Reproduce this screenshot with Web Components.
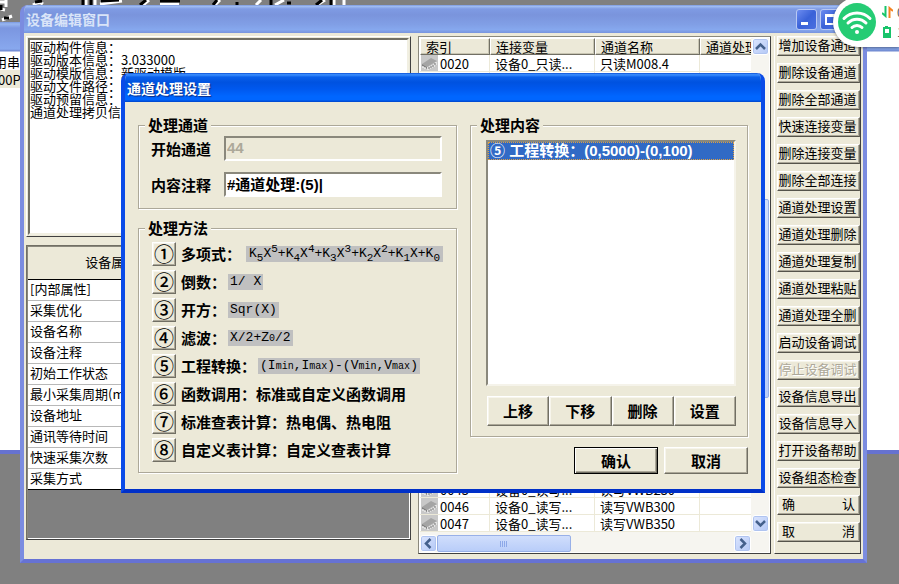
<!DOCTYPE html>
<html lang="zh-CN">
<head>
<meta charset="utf-8">
<title>设备编辑窗口</title>
<style>
html,body{height:100%;margin:0}
body{overflow:hidden;background:#808080;font:13px/13px "Noto Sans CJK SC",sans-serif;color:#000}
</style>
</head>
<body>
<device-app></device-app>
<script>
const define=(name,html,setup)=>{
  const t=document.createElement('template');
  t.innerHTML='<style>*{box-sizing:border-box}:host{display:block;box-sizing:border-box}button,input,textarea{font:inherit;color:inherit;margin:0;border-radius:0}</style>'+html;
  customElements.define(name,class extends HTMLElement{
    constructor(){super();this.attachShadow({mode:'open'}).append(t.content.cloneNode(true));}
    connectedCallback(){if(setup&&!this.ready){this.ready=true;setup(this,this.shadowRoot);}}
  });
};

/* Window frame with a title bar */
define('xp-window',`<style>
:host{display:flex;flex-direction:column;border-radius:8px 8px 0 0;background:#ece9d8;
 border:solid #7b8ce0;border-width:0 4px 4px;border-bottom-color:#6672d4;overflow:hidden}
:host([active]){border-color:#0a4be8;border-bottom-color:#0030c8}
header{flex:none;display:flex;align-items:center;justify-content:space-between;height:28px;margin:0 -4px;padding:0 2px 0 6px;
 background:linear-gradient(#7a98e0 0,#a0bcf2 5%,#7f9be4 14%,#7a94dc 35%,#819fe6 70%,#86a8ee 88%,#7894de 100%);color:#d9e4f8;font-weight:700;font-size:14px;line-height:18px}
:host([active]) header{height:29px;color:#fff;text-shadow:1px 1px 1px #0a2a80;
 background:linear-gradient(#0a50d8 0,#3c90ff 6%,#0a60ea 14%,#0052e0 32%,#0058ee 55%,#0066ff 80%,#0066ff 92%,#0044c8 100%)}
.tools{display:flex;gap:3px}
.body{flex:1;min-height:0;display:flex;flex-direction:column}
</style><header><span id="t"></span><span class="tools"><slot name="tools"></slot></span></header><div class="body"><slot></slot></div>`,
(h,r)=>r.getElementById('t').textContent=h.getAttribute('caption')||'');

define('caption-button',`<style>
button{display:block;width:21px;height:21px;padding:0;border:1px solid #b8c8f4;border-radius:3px;background:linear-gradient(135deg,#6c8cf0,#3a62d8 50%,#4a70e0)}
svg{display:block}
</style><button type="button"><svg width="19" height="19"><path fill="#fff"/></svg></button>`,
(h,r)=>{const k=h.getAttribute('kind');r.querySelector('button').setAttribute('aria-label',k);
r.querySelector('path').setAttribute('d',k==='最小化'?'M4 12h7v3H4z':'M4 4h11v11H4zM6 7v6h7V7z');r.querySelector('path').setAttribute('fill-rule','evenodd');});

/* Raised classic push button */
define('classic-button',`<style>
:host{min-width:0}
button{display:flex;align-items:center;justify-content:center;width:100%;height:100%;padding:0;background:#ece9d8;white-space:nowrap;
 border:1px solid;border-color:#fff #716f64 #716f64 #fff;box-shadow:inset -1px -1px #aca899,inset 1px 1px #f7f5ec}
:host([main]) button{border-color:#000;box-shadow:inset 1px 1px #fff,inset -1px -1px #716f64,inset -2px -2px #aca899}
:host([side]) button{border-bottom-color:#55534a;padding:0 2px 3px 0}
:host([spread]) button{justify-content:space-between;padding:0 4px 3px}
button:disabled{color:#aca899;text-shadow:1px 1px #fff}
</style><button type="button"></button>`,
(h,r)=>{const b=r.querySelector('button');b.disabled=h.hasAttribute('off');
const s=h.getAttribute('text');
if(h.hasAttribute('spread'))for(const c of s){const e=document.createElement('span');e.textContent=c;b.append(e);}else b.textContent=s;});

define('group-box',`<style>
:host{display:flex;flex-direction:column}
fieldset{flex:1;min-width:0;margin:0;padding:0;border:1px solid #aca899;box-shadow:1px 1px #fff,inset 1px 1px #fff}
legend{margin-left:6px;padding:0 3px;height:18px;line-height:18px;background:#ece9d8}
</style><fieldset><legend></legend><slot></slot></fieldset>`,
(h,r)=>r.querySelector('legend').textContent=h.getAttribute('caption'));

define('text-field',`<style>
:host{display:flex;align-items:center}
label{flex:none;width:73px}
input{flex:1;min-width:0;height:25px;padding:0 1px 2px;border:2px solid;border-color:#8a887c #fff #fff #8a887c;background:#fff;outline:0;font-family:"Liberation Sans","Noto Sans CJK SC",sans-serif}
input:disabled{background:#ece9d8;color:#aca899}
</style><label for="f"></label><input id="f">`,
(h,r)=>{r.querySelector('label').textContent=h.getAttribute('label');const i=r.querySelector('input');i.value=h.getAttribute('value');i.disabled=h.hasAttribute('off');});

define('method-row',`<style>
:host{display:flex;align-items:center;height:24px}
classic-button{flex:none;width:24px;height:24px;font-size:20px;line-height:20px;font-weight:500;margin-right:5px}
.n{white-space:nowrap;line-height:20px}
.f{margin-left:2px;padding:0 2px;background:#c0c0c0;font:13px/16px "Liberation Mono",monospace;white-space:pre}
.f ::slotted(*){font-size:10px;line-height:0}
:host([wide]) .f{margin-left:5px;padding:0 3px}
:host([wide]) .f ::slotted(*){font-size:11px}
</style><classic-button></classic-button><span class="n"></span><span class="f"><slot></slot></span>`,
(h,r)=>{r.querySelector('.n').textContent=h.getAttribute('name');
r.querySelector('classic-button').shadowRoot.querySelector('button').textContent=h.getAttribute('no');
r.querySelector('classic-button').setAttribute('text',h.getAttribute('no'));
if(!h.textContent)r.querySelector('.f').remove();});

define('info-box',`<style>
:host{border:1px solid;border-color:#fff #404040 #404040 #fff;padding:1px;background:#ece9d8}
textarea{display:block;width:100%;height:100%;resize:none;overflow:hidden;padding:0;border:2px solid;border-color:#716f64 #f1efe2 #f1efe2 #716f64;background:#fff;outline:0;line-height:13px;white-space:pre}
</style><textarea readonly aria-label="驱动信息">驱动构件信息：
驱动版本信息：3.033000
驱动模版信息：新驱动模版
驱动文件路径：
驱动预留信息：
通道处理拷贝信息：</textarea>`);

define('property-grid',`<style>
:host{background:#808080;border:1px solid;border-color:#716f64 #404040 #404040 #716f64;box-shadow:inset 1px 1px #8a887c,inset -1px -1px #fff;padding:1px 3px 1px 1px}
table{width:100%;border-collapse:collapse;table-layout:fixed}
th{height:32px;padding:0 0 2px;font-weight:400;background:#ece9d8;border-bottom:1px solid #000;border-right:1px solid #000}
td{height:21px;padding:0 2px 2px;background:#fff;border-bottom:1px solid #b8b8b8;white-space:nowrap;border-right:1px solid #b8b8b8}
tr:last-child td{border-bottom-color:#000}
col:first-child{width:180px}
</style><table><colgroup><col><col></colgroup><thead><tr><th>设备属性名<th></thead><tbody></tbody></table>`,
(h,r)=>{for(const s of ['[内部属性]','采集优化','设备名称','设备注释','初始工作状态','最小采集周期(ms)','设备地址','通讯等待时间','快速采集次数','采集方式']){
const tr=r.querySelector('tbody').insertRow();tr.insertCell().textContent=s;tr.insertCell();}});

define('scroll-bar',`<style>
:host{display:flex;background:#f6f5f0}
:host([vertical]){flex-direction:column}
button{flex:none;width:17px;height:17px;padding:0;border:1px solid #fff;border-radius:3px;background:linear-gradient(135deg,#dbe5fe,#b4c8f6);box-shadow:inset 0 0 0 1px #b0c4f0}
svg{display:block}
.track{flex:1;display:flex}
:host([vertical]) .track{flex-direction:column}
.thumb{display:flex;align-items:center;justify-content:center;border:1px solid #98b0e8;border-radius:2px;background:linear-gradient(#d0defc,#b9cdf9);flex:none}
:host([vertical]) .thumb{margin-top:144px;height:199px}
:host(:not([vertical])) .thumb{width:45%}
</style><button type="button" aria-label="向前"><svg width="15" height="15"><path fill="none" stroke="#44608c" stroke-width="2.5"/></svg></button>
<div class="track"><div class="thumb"><svg width="10" height="8"><path d="M1.500 1v6M3.500 1v6M5.500 1v6M7.500 1v6" stroke="#8ca8e8"/></svg></div></div>
<button type="button" aria-label="向后"><svg width="15" height="15"><path fill="none" stroke="#44608c" stroke-width="2.500"/></svg></button>`,
(h,r)=>{const p=r.querySelectorAll('button path'),v=h.hasAttribute('vertical');
p[0].setAttribute('d',v?'M3 10l4.500-4.500L12 10':'M9.500 3L5 7.500 9.500 12');p[1].setAttribute('d',v?'M3 5l4.500 4.500L12 5':'M5.500 3L10 7.500 5.500 12');});

define('channel-table',`<style>
:host{display:grid;grid-template:1fr auto/minmax(0,1fr) 17px;column-gap:1px;row-gap:3px;background:#f6f5f0;border:1px solid;border-color:#8a887c #404040 #404040 #8a887c;outline:1px solid #fff;outline-offset:-2px;padding:1px}
.view{overflow:hidden;background:#fff}
table{width:385px;height:100%;table-layout:fixed;border-collapse:separate;border-spacing:0;text-align:left}
th{height:17px;padding:0 5px 1px;font-weight:400;background:#ece9d8;border:1px solid;border-color:#fff #716f64 #716f64 #fff;box-shadow:inset -1px -1px #c8c5b2;white-space:nowrap}
td{height:17px;padding:0 5px;border:solid #ece9d8;border-width:0 1px 1px 0;white-space:nowrap;overflow:hidden}
td:first-child{padding:0 1px}
.fill td{height:auto}
div.i{display:flex;align-items:center;gap:2px}
</style><div class="view"><table><colgroup><col style="width:70px"><col style="width:105px"><col style="width:105px"><col></colgroup>
<thead><tr><th>索引<th>连接变量<th>通道名称<th>通道处理</thead><tbody></tbody></table></div>
<scroll-bar vertical></scroll-bar><scroll-bar></scroll-bar>`,
(h,r)=>{const b=r.querySelector('tbody');
for(const row of [['0020','设备0_只读...','只读M008.4'],0,['0045','设备0_读写...','读写VWB250'],['0046','设备0_读写...','读写VWB300'],['0047','设备0_读写...','读写VWB350']]){
 const tr=b.insertRow();
 if(!row){tr.className='fill';for(let i=0;i<4;i++)tr.insertCell();continue;}
 tr.insertCell().innerHTML='<div class="i"><svg width="17" height="16" viewBox="0 0 17 16"><path fill="#c8c8c8" d="M0 0h17v16H0z"/><path fill="#a4a4a4" d="M1 9l9-6 6 3-10 6z"/><path fill="#808080" d="M1 9l5 3v2l-5-3z"/><path d="M7 12v3M9 11v3M11 10v3M13 9v3M15 7v3M2 11v2M4 12v2" stroke="#fff"/><path d="M8 12v2M10 11v2M12 10v2M14 8v2" stroke="#777"/></svg><span>'+row[0]+'</span></div>';
 tr.insertCell().textContent=row[1];tr.insertCell().textContent=row[2];tr.insertCell();
}});

define('side-panel',`<style>
:host{display:flex;flex-direction:column;gap:7px;border-left:1px solid #fff;border-right:1px solid #404040;border-bottom:1px solid #404040;padding:0 0 0 2px}
classic-button{flex:none;height:20px}
</style>`,
(h,r)=>{for(const s of ['增加设备通道','删除设备通道','删除全部通道','快速连接变量','删除连接变量','删除全部连接','通道处理设置','通道处理删除','通道处理复制','通道处理粘贴','通道处理全删','启动设备调试','停止设备调试','设备信息导出','设备信息导入','打开设备帮助','设备组态检查','确认','取消']){
 const b=document.createElement('classic-button');b.setAttribute('text',s);b.setAttribute('side','');
 if(s.length===2)b.setAttribute('spread','');if(s==='停止设备调试')b.setAttribute('off','');r.append(b);}});

define('process-dialog',`<style>
:host{font:700 15px/18px "Noto Sans CJK SC",sans-serif}
xp-window{height:100%}
.main{flex:1;display:grid;grid-template-columns:minmax(0,319fr) minmax(0,278fr);column-gap:13px;padding:14px 13px 15px}
.col{display:flex;flex-direction:column;gap:10px}
.fields{display:flex;flex-direction:column;gap:11px;padding:2px 14px 11px 12px}
.methods{display:flex;flex-direction:column;gap:4px;padding:5px 0 10px 13px}
.content{display:flex;flex-direction:column;gap:10px;padding:6px 11px 10px 15px}
ul{height:246px;margin:0;padding:0;list-style:none;background:#fff;border:2px solid;border-color:#8a887c #f5f3ea #f5f3ea #8a887c}
li{height:18px;padding-left:1px;font-family:"Liberation Sans","Noto Sans CJK SC",sans-serif;line-height:16px;background:#316ac5;color:#fff;border:1px dotted #e0a040;white-space:nowrap}
.b4{display:grid;grid-template-columns:repeat(4,1fr);height:30px;padding-left:1px}
.ok{display:flex;justify-content:flex-end;gap:6px}
.ok classic-button{width:84px;height:27px}
</style><xp-window active caption="通道处理设置"><div class="main">
<div class="col"><group-box caption="处理通道"><div class="fields"><text-field label="开始通道" value="44" off></text-field><text-field label="内容注释" value="#通道处理:(5)|"></text-field></div></group-box>
<group-box caption="处理方法"><div class="methods">
<method-row wide no="①" name="多项式：">K<sub>5</sub>X<sup>5</sup>+K<sub>4</sub>X<sup>4</sup>+K<sub>3</sub>X<sup>3</sup>+K<sub>2</sub>X<sup>2</sup>+K<sub>1</sub>X+K<sub>0</sub></method-row>
<method-row no="②" name="倒数：">1/ X</method-row>
<method-row no="③" name="开方：">Sqr(X)</method-row>
<method-row no="④" name="滤波：">X/2+Z<small>0</small>/2</method-row>
<method-row no="⑤" name="工程转换：">(I<small>min</small>,I<small>max</small>)-(V<small>min</small>,V<small>max</small>)</method-row>
<method-row no="⑥" name="函数调用：标准或自定义函数调用"></method-row>
<method-row no="⑦" name="标准查表计算：热电偶、热电阻"></method-row>
<method-row no="⑧" name="自定义表计算：自定义查表计算"></method-row>
</div></group-box></div>
<div class="col"><group-box caption="处理内容"><div class="content"><ul><li>⑤ 工程转换：(0,5000)-(0,100)</li></ul>
<div class="b4"><classic-button text="上移"></classic-button><classic-button text="下移"></classic-button><classic-button text="删除"></classic-button><classic-button text="设置"></classic-button></div></div></group-box>
<div class="ok"><classic-button main text="确认"></classic-button><classic-button text="取消"></classic-button></div></div>
</div></xp-window>`);

define('network-badge',`<style>
:host{display:flex;align-items:center;gap:6px;padding:0 0 6px 5px;background:#fff;border-radius:25px 0 0 25px;box-shadow:0 1px 3px #0006;overflow:hidden;font:12px/20px "Noto Sans CJK SC",sans-serif;color:#555}
svg{flex:none;display:block}
.l{display:flex;flex-direction:column}
.l div{display:flex;gap:4px;align-items:center;white-space:nowrap}
</style><svg width="38" height="38"><circle cx="19" cy="19" r="19" fill="#25cc74"/><g fill="none" stroke="#fff" stroke-width="3" stroke-linecap="round"><path d="M6 15.500a18 18 0 0 1 26 0M10 20a12.500 12.500 0 0 1 18 0M14 24.500a7 7 0 0 1 10 0"/></g><circle cx="19" cy="29" r="2" fill="#fff"/></svg>
<div class="l"><div><svg width="11" height="12"><path d="M3.500 0v10L0 7" fill="none" stroke="#19c46b" stroke-width="2"/><path d="M7.500 12V2L11 5" fill="none" stroke="#f58220" stroke-width="2"/></svg><span>0</span></div>
<div><svg width="11" height="12"><path fill="#19c46b" fill-rule="evenodd" d="M3 0h3v1h3v11H1V1h2zM3 3v4h4V3z"/></svg><span>1</span></div></div>`);

define('device-app',`<style>
:host{position:relative;height:100vh;overflow:hidden}
.art{position:absolute;left:0;top:0}
.back{position:absolute;left:-8px;right:-8px;top:22px;bottom:130px;border-bottom:4px solid #6672d0;background:linear-gradient(#7a98e0 0,#98b6f0 2px,#7b96e0 6px,#88a8ee 27px,#7088d0 29px,#fff 30px)}
.back div{padding-left:2px;height:18px;line-height:20px;margin-top:30px;font-size:13px}
.back div+div{padding-left:6px;margin-top:0;background:#ece9d8;width:36px}
.device{position:absolute;left:20px;right:32px;top:5px;bottom:21px}
.cols{flex:1;min-height:0;display:flex;padding:3px 2px 5px}
.left{width:385px;flex:none;display:flex;flex-direction:column;gap:8px;padding-bottom:14px}
info-box{height:201px}
property-grid{flex:1}
channel-table{flex:1;min-width:0;margin:0 3px 0 7px}
side-panel{width:87px;flex:none}
process-dialog{position:absolute;left:121px;right:134px;top:73px;bottom:91px}
network-badge{position:absolute;left:833px;right:0;top:-3px;height:50px;padding-bottom:0}
</style>
<svg class="art" width="360" height="22"><g fill="none" stroke="#fff" stroke-width="3"><path d="M0 2h5M6 0v7M1 9l4 1M2 20l10-4M33 5q6-4 10-1M86 0v5M95 0v5M100 4l22-3M149 0l-6 5M160 4h19M220 0l-5 5M261 0l-5 5M284 0l-9 5M325 0l-8 5M334 0v5M344 0v5"/></g><g fill="none" stroke="#000" stroke-width="3"><path d="M1 5v5M9 18h-5M35 2l7-1M83 0v5M91 0v5M101 1l18-1M146 0l-6 5M160 1h20M217 0l-4 5M237 2v3M271 0v5M287 3h4M322 0l-6 5M331 0v5"/></g></svg>
<div class="back"><div>用串</div><div>00P</div></div>
<xp-window class="device" caption="设备编辑窗口"><caption-button slot="tools" kind="最小化"></caption-button><caption-button slot="tools" kind="最大化"></caption-button><caption-button slot="tools" kind="关闭"></caption-button>
<div class="cols"><div class="left"><info-box></info-box><property-grid></property-grid></div><channel-table></channel-table><side-panel></side-panel></div></xp-window>
<process-dialog></process-dialog><network-badge></network-badge>`);
</script>
</body>
</html>
